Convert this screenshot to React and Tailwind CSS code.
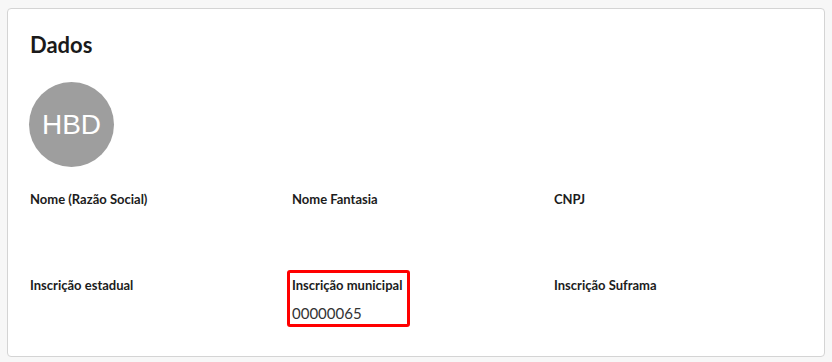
import React from 'react';

const fields = [
    { label: 'Nome (Razão Social)', value: '' },
    { label: 'Nome Fantasia', value: '' },
    { label: 'CNPJ', value: '' },
    { label: 'Inscrição estadual', value: '' },
    { label: 'Inscrição municipal', value: '00000065', highlight: true },
    { label: 'Inscrição Suframa', value: '' },
];

const Field = ({ label, value, highlight }) => (
    <div className="relative">
        {/* Highlight annotation */}
        {highlight && (
            <span className="absolute -left-[5px] -top-[6px] w-[123px] h-[57px] border-[3px] border-[#ff0000] rounded-[3px]" />
        )}
        <p className="text-[13px] leading-[18px] font-bold text-[#1c1c1c]">{label}</p>
        <p className="mt-[9px] min-h-[20px] text-[15px] leading-[20px] text-[#333]">{value}</p>
    </div>
);

const App = () => {
    return (
        <div className="min-h-screen bg-[#f7f7f7] pt-2 px-[7px] pb-[6px]" style={{ fontFamily: 'Lato, "Open Sans", sans-serif' }}>
            <div className="bg-white border border-[#d4d4d4] rounded pl-[22px] pr-[8px] pt-[21px] pb-[33px]">
                {/* Header */}
                <h1 className="text-[22px] leading-[29px] font-bold text-[#1a1a1a]">Dados</h1>

                {/* Avatar */}
                <div className="mt-[23px] -ml-px w-[85px] h-[85px] rounded-full bg-[#9e9e9e] flex items-center justify-center text-white text-[28px] font-['Liberation_Sans',Arial,sans-serif]">
                    HBD
                </div>

                {/* Fields */}
                <div className="mt-[23px] grid grid-cols-3 gap-y-[39px]">
                    {fields.map((f) => (
                        <Field key={f.label} {...f} />
                    ))}
                </div>
            </div>
        </div>
    );
};

export default App;
